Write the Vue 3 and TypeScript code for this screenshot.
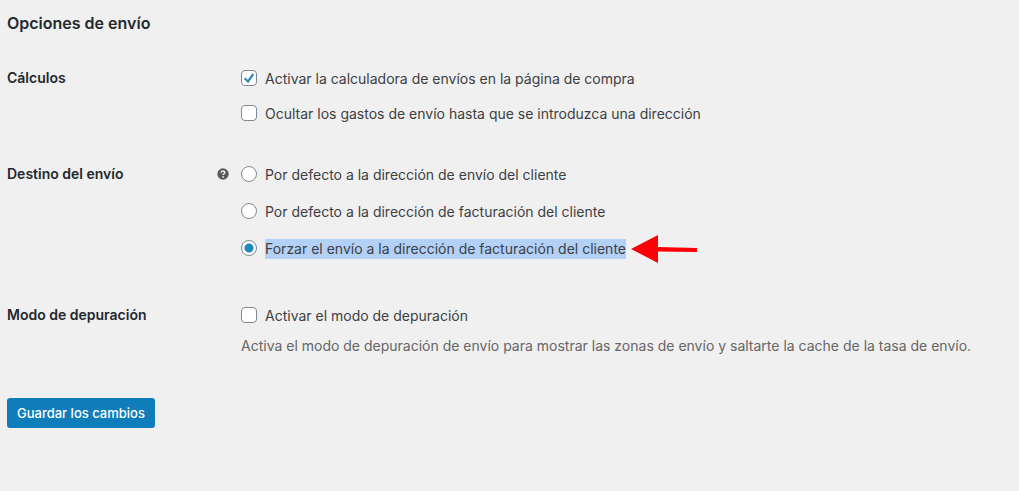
<script setup lang="ts">
import { ref } from 'vue'

const calculator = ref(true)
const hideCosts = ref(false)
const debug = ref(false)
const destination = ref('billing_only')
const destinations = [
  { value: 'shipping', label: 'Por defecto a la dirección de envío del cliente' },
  { value: 'billing', label: 'Por defecto a la dirección de facturación del cliente' },
  { value: 'billing_only', label: 'Forzar el envío a la dirección de facturación del cliente' },
]
</script>

<template>
  <form class="page" @submit.prevent>
    <h2>Opciones de envío</h2>
    <div class="row" role="group" aria-labelledby="t-calc">
      <div id="t-calc" class="title">Cálculos</div>
      <div class="field checks">
        <label class="option"><input v-model="calculator" type="checkbox" /><span>Activar la calculadora de envíos en la página de compra</span></label>
        <label class="option"><input v-model="hideCosts" type="checkbox" /><span>Ocultar los gastos de envío hasta que se introduzca una dirección</span></label>
      </div>
    </div>
    <div class="row destination" role="radiogroup" aria-labelledby="t-dest">
      <div class="title">
        <span id="t-dest">Destino del envío</span>
        <svg class="help" viewBox="0 0 12 12" aria-hidden="true">
          <circle cx="6" cy="6" r="5.7" fill="#5a5a5a" />
          <path d="M4.2 4.7C4.2 2.4 7.8 2.4 7.8 4.6C7.8 5.8 6.1 5.8 6.1 7" fill="none" stroke="#f1f1f1" stroke-width="1.4" />
          <circle cx="6.1" cy="8.8" r=".9" fill="#f1f1f1" />
        </svg>
      </div>
      <div class="field radios">
        <div v-for="d in destinations" :key="d.value" class="line">
          <label class="option"><input v-model="destination" type="radio" name="destination" :value="d.value" /><span :class="{ selected: d.value === 'billing_only' }">{{ d.label }}</span></label>
          <svg v-if="d.value === 'billing_only'" class="arrow" viewBox="0 0 68 30" aria-hidden="true">
            <path d="M1 15L28 1V13L67 14V18L28 17.500V29Z" fill="#fb0007" />
          </svg>
        </div>
      </div>
    </div>
    <div class="row debug" role="group" aria-labelledby="t-debug">
      <div id="t-debug" class="title">Modo de depuración</div>
      <div class="field">
        <label class="option"><input v-model="debug" type="checkbox" /><span>Activar el modo de depuración</span></label>
        <p>Activa el modo de depuración de envío para mostrar las zonas de envío y saltarte la cache de la tasa de envío.</p>
      </div>
    </div>
    <button type="submit">Guardar los cambios</button>
  </form>
</template>

<style>
body { background: #f0f0f0; }
</style>
<style scoped>
.page { padding: 12px 7px; color: #3c4043; font: 14px/20px Inter, "Liberation Sans", sans-serif; }
h2 { margin: 0 0 34px; color: #23282d; font-size: 16px; line-height: 22px; font-weight: 600; }
.row { display: grid; grid-template-columns: 234px 1fr; margin-bottom: 40px; }
.title { display: flex; justify-content: space-between; align-items: center; height: 20px; padding-right: 12px; color: #23282d; font-weight: 600; }
.help { width: 12px; height: 12px; }
.field { display: flex; flex-direction: column; align-items: flex-start; }
.checks { gap: 14px; }
.radios { gap: 16px; }
.destination { margin-bottom: 46px; }
.debug { margin-bottom: 42px; }
.line { display: flex; align-items: center; height: 21px; }
.option { display: flex; align-items: flex-start; gap: 8px; height: 21px; white-space: nowrap; }
.option span { margin-top: 1px; }
input { appearance: none; box-sizing: border-box; flex: none; width: 16px; height: 16px; margin: 2px 0 0; border: 1px solid #7e8993; border-radius: 4px; background: #fff center / 100% no-repeat; }
input[type="checkbox"]:checked { background-image: url("data:image/svg+xml,%3Csvg xmlns='http://www.w3.org/2000/svg' viewBox='0 0 14 14'%3E%3Cpath d='M2.700 7.200L6 10.500L11.300 3' fill='none' stroke='%23358bb5' stroke-width='2.200'/%3E%3C/svg%3E"); }
input[type="radio"] { border-radius: 50%; }
input[type="radio"]:checked { background-image: radial-gradient(circle, #1e8cbe 4px, transparent 5px); }
.selected { background: #b3d1f7; }
.arrow { width: 68px; height: 30px; margin-left: 4px; }
p { margin: 10px 0 0; color: #666; }
button { height: 30px; padding: 0 10px; border: 0; border-radius: 3px; background: #0f7dba; color: #fff; font: 500 13px/20px Inter, sans-serif; }
</style>
